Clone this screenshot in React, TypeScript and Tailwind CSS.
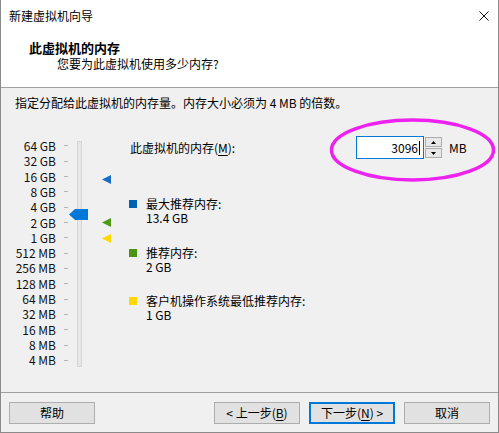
import React from "react";

const labels = [
  "64 GB", "32 GB", "16 GB", "8 GB", "4 GB", "2 GB", "1 GB",
  "512 MB", "256 MB", "128 MB", "64 MB", "32 MB", "16 MB", "8 MB", "4 MB",
];

function Tri({ color, top }: { color: string; top: string }) {
  return (
    <svg
      width="9"
      height="9"
      viewBox="0 0 9 9"
      className={`absolute left-[101px] ${top}`}
    >
      <polygon points="0,4.5 9,0 9,9" fill={color} />
    </svg>
  );
}

function Legend({ color, title, value, mt }: { color: string; title: string; value: string; mt: string }) {
  return (
    <div className={`flex ${mt}`}>
      <div className={`w-[8px] h-[8px] mt-[4px] ${color}`} />
      <div className="ml-[9px] flex flex-col">
        <span className="leading-[15px]">{title}</span>
        <span className="leading-[14px]">{value}</span>
      </div>
    </div>
  );
}

function Btn({ children, primary }: { children: React.ReactNode; primary?: boolean }) {
  return (
    <div
      className={`w-[86px] h-[22px] flex items-center justify-center bg-[#e1e1e1] leading-none ${
        primary ? "border-2 border-[#0078d7]" : "border border-[#adadad]"
      }`}
    >
      {children}
    </div>
  );
}

export default function App() {
  return (
    <div className="relative w-[499px] h-[433px] bg-[#f0f0f0] border-x border-b border-[#8a8a8a] flex flex-col text-[12px] text-black font-['Noto_Sans_CJK_SC','Noto_Sans',sans-serif] overflow-hidden">
      {/* Title bar */}
      <div className="h-[31px] shrink-0 bg-white flex items-center justify-between pl-[8px] pr-[9px]">
        <span className="leading-[16px]">新建虚拟机向导</span>
        <svg width="10" height="10" viewBox="0 0 10 10">
          <path d="M0.5 0.5 L9.5 9.5 M9.5 0.5 L0.5 9.5" stroke="#111" strokeWidth="1" />
        </svg>
      </div>

      {/* Header */}
      <div className="h-[57px] shrink-0 bg-white border-b border-[#a0a0a0] pt-[8px] flex flex-col">
        <span className="pl-[28px] text-[13px] font-bold leading-[17px]">此虚拟机的内存</span>
        <span className="pl-[56px] leading-[16px]">您要为此虚拟机使用多少内存?</span>
      </div>

      {/* Content */}
      <div className="h-[304px] shrink-0 flex flex-col">
        <p className="pl-[14px] pt-[7px] leading-[16px]">
          指定分配给此虚拟机的内存量。内存大小必须为 4 MB 的倍数。
        </p>

        <div className="mt-[25px] flex">
          {/* Slider widget */}
          <div className="relative w-[128px] h-[232px] flex">
            <div className="flex flex-col pt-[2.3px]">
              {labels.map((l) => (
                <div key={l} className="h-[15.43px] flex items-center">
                  <span className="w-[55px] text-right leading-none text-[#111]">{l}</span>
                  <span className="ml-[8px] w-[4px] h-[1px] bg-[#b4b4b4]" />
                </div>
              ))}
            </div>
            <div className="ml-[9px] mt-[5px] w-[5px] h-[226px] border border-[#d4d4d4] bg-[#e7e7e7]" />

            {/* Thumb */}
            <svg width="19" height="11" viewBox="0 0 19 11" className="absolute left-[68px] top-[73px]">
              <polygon points="0,5.5 6,0 19,0 19,11 6,11" fill="#0078d7" />
            </svg>

            <Tri color="#1a6cc4" top="top-[39px]" />
            <Tri color="#4c9a16" top="top-[82px]" />
            <Tri color="#ffd800" top="top-[98px]" />
          </div>

          {/* Right column */}
          <div className="flex flex-col">
            <div className="h-[23px] flex items-center">
              <span className="w-[227px] pl-[1px] leading-none">
                此虚拟机的内存(<span className="underline underline-offset-2">M</span>):
              </span>
              <div className="w-[68px] h-[23px] bg-white border border-[#0078d7] flex items-center justify-end pr-[3px]">
                <span className="leading-none">3096</span>
                <span className="ml-[1px] w-[1px] h-[14px] bg-black" />
              </div>
              <div className="w-[18px] h-[23px] flex flex-col gap-[1px] py-[1px] pl-[1px]">
                <div className="h-[10px] border border-[#adadad] bg-[#e8e8e8] flex items-center justify-center">
                  <svg width="5" height="3" viewBox="0 0 5 3">
                    <polygon points="2.5,0 5,3 0,3" fill="#000" />
                  </svg>
                </div>
                <div className="h-[10px] border border-[#adadad] bg-[#e8e8e8] flex items-center justify-center">
                  <svg width="5" height="3" viewBox="0 0 5 3">
                    <polygon points="0,0 5,0 2.5,3" fill="#000" />
                  </svg>
                </div>
              </div>
              <span className="ml-[7px] leading-none">MB</span>
            </div>

            <Legend color="bg-[#0063b1]" title="最大推荐内存:" value="13.4 GB" mt="mt-[36.5px]" />
            <Legend color="bg-[#4a9514]" title="推荐内存:" value="2 GB" mt="mt-[20px]" />
            <Legend color="bg-[#ffd800]" title="客户机操作系统最低推荐内存:" value="1 GB" mt="mt-[19px]" />
          </div>
        </div>
      </div>

      {/* Footer */}
      <div className="h-[40px] shrink-0 border-t border-[#a0a0a0] pt-[9px] px-[8px] flex items-start">
        <Btn>帮助</Btn>
        <div className="ml-auto flex gap-[9px]">
          <Btn>
            &lt; 上一步(<span className="underline underline-offset-2">B</span>)
          </Btn>
          <Btn primary>
            下一步(<span className="underline underline-offset-2">N</span>) &gt;
          </Btn>
          <Btn>取消</Btn>
        </div>
      </div>

      {/* Annotation ellipse */}
      <svg
        width="170"
        height="68"
        viewBox="0 0 170 68"
        className="absolute left-[327px] top-[116px] pointer-events-none"
      >
        <ellipse cx="84.5" cy="34" rx="81" ry="30" fill="none" stroke="#ee22ee" strokeWidth="3.5" />
      </svg>
    </div>
  );
}
